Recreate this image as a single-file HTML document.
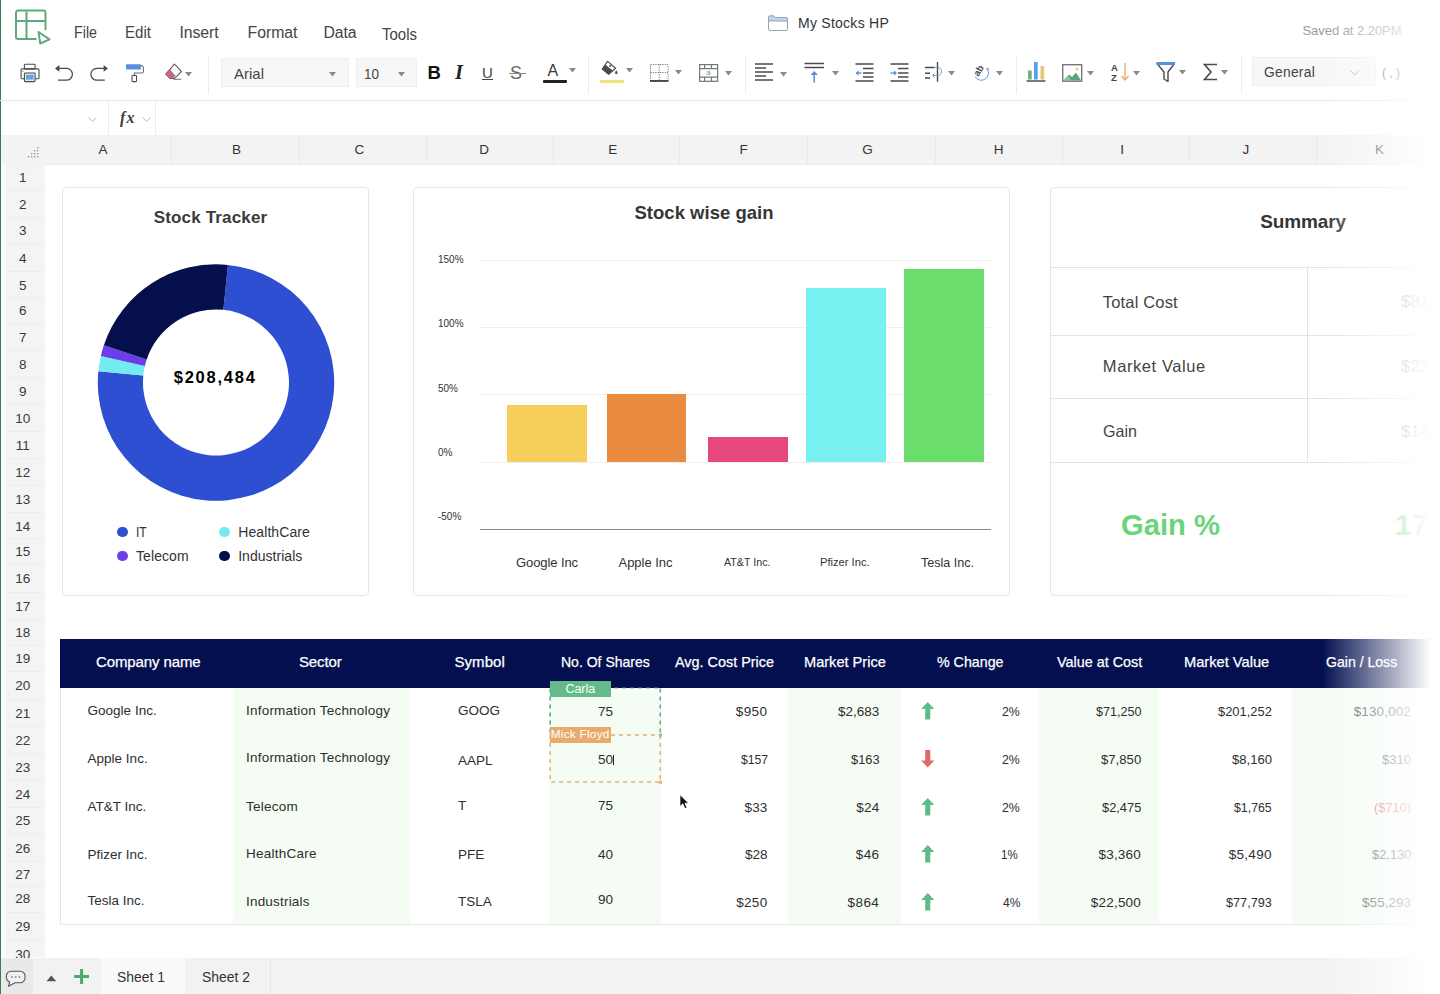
<!DOCTYPE html><html><head><meta charset="utf-8"><style>
html,body{margin:0;padding:0;}
body{width:1440px;height:994px;overflow:hidden;position:relative;background:#fff;font-family:"Liberation Sans",sans-serif;}
.t{position:absolute;white-space:nowrap;line-height:1;}
svg{overflow:visible}
</style></head><body>
<div style="position:absolute;left:0px;top:0px;width:1.2px;height:994px;background:#3f7a57;"></div>
<svg style="position:absolute;left:14px;top:9px;" width="38" height="37" viewBox="0 0 38 37"><g fill="none" stroke="#5fa97a" stroke-width="2" stroke-linejoin="round">
<path d="M22.5 30 H4 a2 2 0 0 1 -2 -2 V3.5 a2 2 0 0 1 2 -2 H29.5 a2 2 0 0 1 2 2 V21"/>
<path d="M2 12 H31.5 M12.5 2.5 V30"/>
<path d="M24.5 23 L35.5 30.3 L26.3 34.5 Z"/>
</g></svg>
<div class="t" style="left:74.00px;top:25.23px;font-size:15.8px;color:#444;transform:scaleX(0.9034);transform-origin:0 0;">File</div>
<div class="t" style="left:124.50px;top:25.23px;font-size:15.8px;color:#444;transform:scaleX(0.9550);transform-origin:0 0;">Edit</div>
<div class="t" style="left:179.50px;top:25.23px;font-size:15.8px;color:#444;letter-spacing:-0.086px;">Insert</div>
<div class="t" style="left:247.50px;top:25.23px;font-size:15.8px;color:#444;letter-spacing:-0.006px;">Format</div>
<div class="t" style="left:323.50px;top:25.23px;font-size:15.8px;color:#444;letter-spacing:-0.094px;">Data</div>
<div class="t" style="left:381.50px;top:26.93px;font-size:15.8px;color:#444;transform:scaleX(0.9489);transform-origin:0 0;">Tools</div>
<svg style="position:absolute;left:767px;top:14px;" width="22" height="17" viewBox="0 0 22 17"><path d="M1.5 3.5 a1.5 1.5 0 0 1 1.5 -1.5 H7 L8.5 3.5 H19 a1.5 1.5 0 0 1 1.5 1.5 V15 a1.5 1.5 0 0 1 -1.5 1.5 H3 a1.5 1.5 0 0 1 -1.5 -1.5 Z" fill="#fff" stroke="#9aa4b2" stroke-width="1"/>
<path d="M1.5 3.5 a1.5 1.5 0 0 1 1.5 -1.5 H7 L8.5 3.5 H19 a1.5 1.5 0 0 1 1.5 1.5 V7 H1.5 Z" fill="#bcd3f2" stroke="#9aa4b2" stroke-width="1"/></svg>
<div class="t" style="left:798.00px;top:15.85px;font-size:14px;color:#333;letter-spacing:0.258px;">My Stocks HP</div>
<div class="t" style="left:1302.50px;top:23.70px;font-size:13px;color:#9a9a9a;letter-spacing:-0.049px;">Saved at 2.20PM</div>
<svg style="position:absolute;left:20px;top:63px;" width="20" height="20" viewBox="0 0 20 20"><g fill="none" stroke="#4a4a4a" stroke-width="1.1">
<rect x="4.4" y="1.3" width="10.7" height="4.6" rx="0.8"/>
<path d="M4.2 15.8 H2.2 a1.1 1.1 0 0 1 -1.1 -1.1 V7 a1.1 1.1 0 0 1 1.1 -1.1 H17.9 a1.1 1.1 0 0 1 1.1 1.1 V14.7 a1.1 1.1 0 0 1 -1.1 1.1 H15.2"/></g>
<rect x="4.4" y="10" width="10.7" height="8.6" rx="0.8" fill="#dbe7f7" stroke="#4a4a4a" stroke-width="1.1"/>
<rect x="6" y="11.8" width="7.5" height="4.8" fill="#6c9ee0"/><circle cx="3" cy="8.2" r="0.5" fill="#4a4a4a"/></svg>
<svg style="position:absolute;left:54px;top:64px;" width="20" height="18" viewBox="0 0 20 18"><path d="M4 4.4 H12.5 a5.9 5.9 0 0 1 0 11.8 H4" fill="none" stroke="#4a4a4a" stroke-width="1.25"/><path d="M1 4.4 L5.4 1 V7.8 Z" fill="#4a4a4a"/></svg>
<svg style="position:absolute;left:89px;top:64px;" width="20" height="18" viewBox="0 0 20 18"><path d="M16 4.4 H7.8 a5.9 5.9 0 0 0 0 11.8 H15.8" fill="none" stroke="#4a4a4a" stroke-width="1.25"/><path d="M19 4.4 L14.6 1 V7.8 Z" fill="#4a4a4a"/></svg>
<svg style="position:absolute;left:125px;top:63px;" width="20" height="20" viewBox="0 0 20 20"><rect x="1" y="1.25" width="15" height="5.3" rx="0.8" fill="#5b8fdc"/>
<path d="M16 2.6 Q18.4 2.8 18.4 5 V8.6 Q18.4 10 17 10 H9.3 V12.4" fill="none" stroke="#6b6b6b" stroke-width="1.05"/>
<rect x="7" y="12.4" width="4.5" height="6.2" rx="0.8" fill="#fff" stroke="#4a4a4a" stroke-width="1.05"/></svg>
<svg style="position:absolute;left:164px;top:63px;" width="20" height="18" viewBox="0 0 20 18"><path d="M10.4 1 L17.4 8.3 L10.6 15.5 H6.4 L2.2 11.3 Z" fill="#fff" stroke="#4a4a4a" stroke-width="1.05" stroke-linejoin="round"/>
<path d="M1.6 11.3 Q1.6 10.2 2.8 9 L5.4 6.6 L11.3 12.8 L8.8 15.8 H6.8 Q6 15.8 5 14.9 Z" fill="#c46b80" stroke="#8a4a5a" stroke-width="0.5"/>
<path d="M9.6 16.3 H17.2" stroke="#777" stroke-width="1.05"/></svg>
<svg style="position:absolute;left:185.3px;top:71.7px;" width="8" height="5" viewBox="0 0 8 5"><path d="M0 0 H7 L3.5 4.5 Z" fill="#8a8a8a"/></svg>
<div style="position:absolute;left:208px;top:56px;width:1px;height:38px;background:#ececec;"></div>
<div style="position:absolute;left:221px;top:58px;width:128px;height:29px;background:#f7f7f7;border:1px solid #efefef;box-sizing:border-box;"></div>
<div class="t" style="left:234.00px;top:65.90px;font-size:15px;color:#444;letter-spacing:-0.001px;">Arial</div>
<svg style="position:absolute;left:329px;top:71.7px;" width="8" height="5" viewBox="0 0 8 5"><path d="M0 0 H7 L3.5 4.5 Z" fill="#8a8a8a"/></svg>
<div style="position:absolute;left:356px;top:58px;width:61px;height:29px;background:#f7f7f7;border:1px solid #efefef;box-sizing:border-box;"></div>
<div class="t" style="left:364.00px;top:65.90px;font-size:15px;color:#444;transform:scaleX(0.8990);transform-origin:0 0;">10</div>
<svg style="position:absolute;left:398.3px;top:71.7px;" width="8" height="5" viewBox="0 0 8 5"><path d="M0 0 H7 L3.5 4.5 Z" fill="#8a8a8a"/></svg>
<div class="t" style="left:427.50px;top:63.84px;font-size:18.5px;color:#111;font-weight:bold;">B</div>
<div class="t" style="left:455px;top:61.5px;font-size:20.5px;color:#222;font-family:'Liberation Serif',serif;font-style:italic;font-weight:bold;">I</div>
<div class="t" style="left:482.00px;top:65.30px;font-size:15px;color:#444;">U</div>
<div style="position:absolute;left:482px;top:79.2px;width:11px;height:1.3px;background:#444;"></div>
<div class="t" style="left:510.00px;top:64.26px;font-size:18px;color:#666;">S</div>
<div style="position:absolute;left:509px;top:72.5px;width:17px;height:1.2px;background:#888;"></div>
<div class="t" style="left:547.50px;top:62.96px;font-size:16px;color:#3a3a3a;">A</div>
<div style="position:absolute;left:542.5px;top:79.5px;width:24px;height:3px;background:#222;border-radius:1px;"></div>
<svg style="position:absolute;left:569px;top:68.1px;" width="8" height="5" viewBox="0 0 8 5"><path d="M0 0 H7 L3.5 4.5 Z" fill="#8a8a8a"/></svg>
<div style="position:absolute;left:588px;top:56px;width:1px;height:38px;background:#ececec;"></div>
<svg style="position:absolute;left:600px;top:60px;" width="20" height="16" viewBox="0 0 20 16"><path d="M7.6 1.4 L15.6 8.3 L8.6 14.4 L2.2 9 Z" fill="#fff" stroke="#4a4a4a" stroke-width="1.15" stroke-linejoin="round"/>
<path d="M5.2 4.6 L12.9 10.8 L8.6 14.4 L2.2 9 Z" fill="#4a4a4a"/><circle cx="10.2" cy="5.9" r="1" fill="#4a4a4a"/>
<path d="M16.3 10.3 q1.2 1.7 1.2 2.6 a1.2 1.2 0 0 1 -2.4 0 q0 -0.9 1.2 -2.6z" fill="#4a4a4a"/></svg>
<div style="position:absolute;left:599.7px;top:79.9px;width:23.9px;height:2.8px;background:#efe47c;"></div>
<svg style="position:absolute;left:625.7px;top:68.1px;" width="8" height="5" viewBox="0 0 8 5"><path d="M0 0 H7 L3.5 4.5 Z" fill="#8a8a8a"/></svg>
<svg style="position:absolute;left:650px;top:64px;" width="19" height="18" viewBox="0 0 19 18"><g fill="none" stroke="#777" stroke-width="1" stroke-dasharray="1.2 1.2">
<rect x="0.5" y="0.5" width="17.5" height="16"/><path d="M9.2 0.5 V16.5 M0.5 8.5 H18"/></g><path d="M0 17 H18.5" stroke="#222" stroke-width="1.5"/></svg>
<svg style="position:absolute;left:675px;top:70px;" width="8" height="5" viewBox="0 0 8 5"><path d="M0 0 H7 L3.5 4.5 Z" fill="#8a8a8a"/></svg>
<svg style="position:absolute;left:699px;top:64px;" width="19" height="18" viewBox="0 0 19 18"><g fill="none" stroke="#777" stroke-width="1.2">
<rect x="0.6" y="0.6" width="18" height="16.7"/><path d="M0.6 4.7 H18.6 M0.6 13.1 H18.6 M5.6 0.6 V4.7 M12.5 0.6 V4.7 M5.6 13.1 V17.3 M12.5 13.1 V17.3"/></g>
<text x="9.6" y="11.2" font-size="8" fill="#4caf7a" text-anchor="middle" font-family="Liberation Sans">a</text></svg>
<svg style="position:absolute;left:724.5px;top:70.5px;" width="8" height="5" viewBox="0 0 8 5"><path d="M0 0 H7 L3.5 4.5 Z" fill="#8a8a8a"/></svg>
<div style="position:absolute;left:744.5px;top:56px;width:1px;height:38px;background:#ececec;"></div>
<svg style="position:absolute;left:755px;top:63px;" width="19" height="19" viewBox="0 0 19 19"><g stroke="#4a4a4a" stroke-width="1.5"><path d="M0 1 H18 M0 5 H11 M0 9 H18 M0 13 H11 M0 17 H18"/></g></svg>
<svg style="position:absolute;left:780px;top:72.3px;" width="8" height="5" viewBox="0 0 8 5"><path d="M0 0 H7 L3.5 4.5 Z" fill="#8a8a8a"/></svg>
<svg style="position:absolute;left:804px;top:62px;" width="21" height="21" viewBox="0 0 21 21"><g stroke="#4a4a4a" stroke-width="1.5"><path d="M0.5 1.5 H20 M0.5 5.5 H20"/></g><path d="M10.2 20.5 V12" stroke="#5b8fdc" stroke-width="1.6"/><path d="M6.5 13 L10.2 9 L14 13 Z" fill="#5b8fdc"/></svg>
<svg style="position:absolute;left:831.6px;top:70.8px;" width="8" height="5" viewBox="0 0 8 5"><path d="M0 0 H7 L3.5 4.5 Z" fill="#8a8a8a"/></svg>
<svg style="position:absolute;left:855px;top:63px;" width="19" height="19" viewBox="0 0 19 19"><g stroke="#4a4a4a" stroke-width="1.5"><path d="M0.5 1 H18.5 M8 5.5 H18.5 M8 10 H18.5 M8 14 H18.5 M0.5 18 H18.5"/></g><path d="M6.5 10 H1.5" stroke="#5b8fdc" stroke-width="1.4"/><path d="M0.5 10 L3.5 7.5 V12.5 Z" fill="#5b8fdc"/></svg>
<svg style="position:absolute;left:890px;top:63px;" width="19" height="19" viewBox="0 0 19 19"><g stroke="#4a4a4a" stroke-width="1.5"><path d="M0.5 1 H18.5 M8 5.5 H18.5 M8 10 H18.5 M8 14 H18.5 M0.5 18 H18.5"/></g><path d="M0.5 10 H5" stroke="#5b8fdc" stroke-width="1.4"/><path d="M7 10 L4 7.5 V12.5 Z" fill="#5b8fdc"/></svg>
<svg style="position:absolute;left:924px;top:61px;" width="22" height="23" viewBox="0 0 22 23"><g stroke="#4a4a4a" stroke-width="1.5"><path d="M1 6.4 H10.7 M1 12.3 H6 M1 17.1 H6"/></g><path d="M13.5 1 V20.75" stroke="#4a4a4a" stroke-width="1.4"/>
<path d="M10.7 6.4 H13.5 A4 4 0 0 1 13.5 14.5 H8.6" fill="none" stroke="#7aa0d8" stroke-width="1"/><path d="M10.6 12.5 L8.4 14.5 L10.6 16.5" fill="none" stroke="#7aa0d8" stroke-width="1"/></svg>
<svg style="position:absolute;left:948px;top:70.8px;" width="8" height="5" viewBox="0 0 8 5"><path d="M0 0 H7 L3.5 4.5 Z" fill="#8a8a8a"/></svg>
<svg style="position:absolute;left:970px;top:62px;" width="22" height="20" viewBox="0 0 22 20"><text x="8.3" y="12" font-size="9.5" font-weight="bold" fill="#4a4a4a" font-family="Liberation Sans" text-anchor="middle" transform="rotate(-60 8.3 8.5)">ab</text>
<path d="M5 14.6 A6.8 6.8 0 0 0 17.6 7.5" fill="none" stroke="#6c9ee0" stroke-width="1"/><path d="M15.8 7.4 L17.9 5.8 L18.7 8.6" fill="none" stroke="#6c9ee0" stroke-width="1"/></svg>
<svg style="position:absolute;left:996px;top:70.8px;" width="8" height="5" viewBox="0 0 8 5"><path d="M0 0 H7 L3.5 4.5 Z" fill="#8a8a8a"/></svg>
<div style="position:absolute;left:1015.5px;top:56px;width:1px;height:38px;background:#ececec;"></div>
<svg style="position:absolute;left:1026px;top:61px;" width="21" height="22" viewBox="0 0 21 22"><rect x="2" y="9.5" width="3.7" height="9" fill="#6fb07a"/><rect x="8" y="1" width="3.7" height="17.5" fill="#5b9ee6"/><rect x="14.5" y="5" width="3.7" height="13.5" fill="#e8c57a"/><path d="M0.5 20 H19.5" stroke="#333" stroke-width="1.3"/></svg>
<svg style="position:absolute;left:1062px;top:64px;" width="21" height="19" viewBox="0 0 21 19"><rect x="0.7" y="0.7" width="19" height="16.5" fill="#fff" stroke="#777" stroke-width="1.4"/><path d="M1.5 16.5 L7 10.5 L10 13 L14 8.5 L19 16.5 Z" fill="#5aa57a"/><path d="M1.5 16.5 L6 11.5 L9 16.5 Z" fill="#8cc69c"/><circle cx="15" cy="5" r="1.5" fill="#e8d45a"/></svg>
<svg style="position:absolute;left:1087px;top:71px;" width="8" height="5" viewBox="0 0 8 5"><path d="M0 0 H7 L3.5 4.5 Z" fill="#8a8a8a"/></svg>
<div class="t" style="left:1111.00px;top:62.96px;font-size:9.5px;color:#444;font-weight:bold;">A</div>
<div class="t" style="left:1111.00px;top:72.96px;font-size:9.5px;color:#444;font-weight:bold;">Z</div>
<svg style="position:absolute;left:1120px;top:62px;" width="10" height="20" viewBox="0 0 10 20"><path d="M5 1 V18 M1.5 14 L5 18 L8.5 14" fill="none" stroke="#e8a86a" stroke-width="1.3"/></svg>
<svg style="position:absolute;left:1132.5px;top:71px;" width="8" height="5" viewBox="0 0 8 5"><path d="M0 0 H7 L3.5 4.5 Z" fill="#8a8a8a"/></svg>
<svg style="position:absolute;left:1156px;top:62px;" width="20" height="21" viewBox="0 0 20 21"><path d="M1 1.5 H18.5 L12 10 V19.5 L8 17 V10 Z" fill="none" stroke="#4a4a4a" stroke-width="1.4" stroke-linejoin="round"/><path d="M0.5 0 H19 V3 H0.5 Z" fill="#5b8fdc"/></svg>
<svg style="position:absolute;left:1178.7px;top:69.8px;" width="8" height="5" viewBox="0 0 8 5"><path d="M0 0 H7 L3.5 4.5 Z" fill="#8a8a8a"/></svg>
<svg style="position:absolute;left:1203px;top:63px;" width="15" height="18" viewBox="0 0 15 18"><path d="M14 1.5 H1.5 L8 9 L1.5 16.5 H14" fill="none" stroke="#4a4a4a" stroke-width="1.6"/></svg>
<svg style="position:absolute;left:1220.8px;top:69.8px;" width="8" height="5" viewBox="0 0 8 5"><path d="M0 0 H7 L3.5 4.5 Z" fill="#8a8a8a"/></svg>
<div style="position:absolute;left:1240.5px;top:56px;width:1px;height:38px;background:#ececec;"></div>
<div style="position:absolute;left:1252px;top:57px;width:124px;height:29px;background:#f7f7f7;border:1px solid #efefef;box-sizing:border-box;"></div>
<div class="t" style="left:1264.00px;top:66.12px;font-size:13.8px;color:#444;letter-spacing:0.272px;">General</div>
<svg style="position:absolute;left:1350px;top:70px;" width="10" height="6" viewBox="0 0 10 6"><path d="M0.5 0.5 L4.7 5 L9 0.5" fill="none" stroke="#aaa" stroke-width="1"/></svg>
<div class="t" style="left:1381.50px;top:66.00px;font-size:13px;color:#555;transform:scaleX(0.9234);transform-origin:0 0;">( , )</div>
<div style="position:absolute;left:0px;top:100px;width:1440px;height:1px;background:#e6e6e6;"></div>
<div style="position:absolute;left:108px;top:101px;width:1px;height:34px;background:#ececec;"></div>
<div style="position:absolute;left:155px;top:101px;width:1px;height:34px;background:#ececec;"></div>
<svg style="position:absolute;left:88px;top:117px;" width="9" height="6" viewBox="0 0 9 6"><path d="M0.5 0.5 L4.5 4.5 L8.5 0.5" fill="none" stroke="#bbb" stroke-width="1"/></svg>
<div class="t" style="left:120px;top:110px;font-size:16px;letter-spacing:1.2px;color:#404040;font-family:'Liberation Serif',serif;font-style:italic;font-weight:bold;">fx</div>
<svg style="position:absolute;left:142px;top:117px;" width="9" height="6" viewBox="0 0 9 6"><path d="M0.5 0.5 L4.5 4.5 L8.5 0.5" fill="none" stroke="#bbb" stroke-width="1"/></svg>
<div style="position:absolute;left:1.3px;top:135px;width:1440px;height:29px;background:#f3f3f3;"></div>
<div style="position:absolute;left:45px;top:163.5px;width:1395px;height:0.8px;background:#ececec;"></div>
<div style="position:absolute;left:171.2px;top:135px;width:1px;height:29px;background:#e8e8e8;"></div>
<div style="position:absolute;left:299px;top:135px;width:1px;height:29px;background:#e8e8e8;"></div>
<div style="position:absolute;left:426px;top:135px;width:1px;height:29px;background:#e8e8e8;"></div>
<div style="position:absolute;left:553px;top:135px;width:1px;height:29px;background:#e8e8e8;"></div>
<div style="position:absolute;left:679px;top:135px;width:1px;height:29px;background:#e8e8e8;"></div>
<div style="position:absolute;left:807px;top:135px;width:1px;height:29px;background:#e8e8e8;"></div>
<div style="position:absolute;left:935px;top:135px;width:1px;height:29px;background:#e8e8e8;"></div>
<div style="position:absolute;left:1061.5px;top:135px;width:1px;height:29px;background:#e8e8e8;"></div>
<div style="position:absolute;left:1189.3px;top:135px;width:1px;height:29px;background:#e8e8e8;"></div>
<div style="position:absolute;left:1315.5px;top:135px;width:1px;height:29px;background:#e8e8e8;"></div>
<div class="t" style="left:98.60px;top:143.17px;font-size:13.5px;color:#333;">A</div>
<div class="t" style="left:231.90px;top:143.17px;font-size:13.5px;color:#333;">B</div>
<div class="t" style="left:354.53px;top:143.17px;font-size:13.5px;color:#333;">C</div>
<div class="t" style="left:479.13px;top:143.17px;font-size:13.5px;color:#333;">D</div>
<div class="t" style="left:608.20px;top:143.17px;font-size:13.5px;color:#333;">E</div>
<div class="t" style="left:739.48px;top:143.17px;font-size:13.5px;color:#333;">F</div>
<div class="t" style="left:862.35px;top:143.17px;font-size:13.5px;color:#333;">G</div>
<div class="t" style="left:993.63px;top:143.17px;font-size:13.5px;color:#333;">H</div>
<div class="t" style="left:1120.32px;top:143.17px;font-size:13.5px;color:#333;">I</div>
<div class="t" style="left:1242.42px;top:143.17px;font-size:13.5px;color:#333;">J</div>
<div class="t" style="left:1374.90px;top:143.17px;font-size:13.5px;color:#333;">K</div>
<svg style="position:absolute;left:27px;top:144.5px;" width="14" height="14" viewBox="0 0 14 14"><rect x="10" y="2" width="1.4" height="1.4" fill="#999"/><rect x="10" y="5" width="1.4" height="1.4" fill="#999"/><rect x="10" y="8" width="1.4" height="1.4" fill="#999"/><rect x="10" y="11" width="1.4" height="1.4" fill="#999"/><rect x="7" y="5" width="1.4" height="1.4" fill="#999"/><rect x="7" y="8" width="1.4" height="1.4" fill="#999"/><rect x="7" y="11" width="1.4" height="1.4" fill="#999"/><rect x="4" y="8" width="1.4" height="1.4" fill="#999"/><rect x="4" y="11" width="1.4" height="1.4" fill="#999"/><rect x="1" y="11" width="1.4" height="1.4" fill="#999"/></svg>
<div style="position:absolute;left:6px;top:164px;width:38.7px;height:793px;background:#f4f4f4;"></div>
<div style="position:absolute;left:1.2px;top:164px;width:4.8px;height:793px;background:#f9faf9;"></div>
<div style="position:absolute;left:6px;top:190.2px;width:38px;height:1px;background:#ececec;"></div>
<div class="t" style="left:19.05px;top:170.97px;font-size:13.5px;color:#3a3a3a;">1</div>
<div style="position:absolute;left:6px;top:216.65px;width:38px;height:1px;background:#ececec;"></div>
<div class="t" style="left:19.05px;top:198.17px;font-size:13.5px;color:#3a3a3a;">2</div>
<div style="position:absolute;left:6px;top:243.8px;width:38px;height:1px;background:#ececec;"></div>
<div class="t" style="left:19.05px;top:223.87px;font-size:13.5px;color:#3a3a3a;">3</div>
<div style="position:absolute;left:6px;top:271.20000000000005px;width:38px;height:1px;background:#ececec;"></div>
<div class="t" style="left:19.05px;top:252.47px;font-size:13.5px;color:#3a3a3a;">4</div>
<div style="position:absolute;left:6px;top:297.05px;width:38px;height:1px;background:#ececec;"></div>
<div class="t" style="left:19.05px;top:278.67px;font-size:13.5px;color:#3a3a3a;">5</div>
<div style="position:absolute;left:6px;top:323.20000000000005px;width:38px;height:1px;background:#ececec;"></div>
<div class="t" style="left:19.05px;top:304.17px;font-size:13.5px;color:#3a3a3a;">6</div>
<div style="position:absolute;left:6px;top:350.1px;width:38px;height:1px;background:#ececec;"></div>
<div class="t" style="left:19.05px;top:330.97px;font-size:13.5px;color:#3a3a3a;">7</div>
<div style="position:absolute;left:6px;top:377.20000000000005px;width:38px;height:1px;background:#ececec;"></div>
<div class="t" style="left:19.05px;top:357.97px;font-size:13.5px;color:#3a3a3a;">8</div>
<div style="position:absolute;left:6px;top:404.35px;width:38px;height:1px;background:#ececec;"></div>
<div class="t" style="left:19.05px;top:385.17px;font-size:13.5px;color:#3a3a3a;">9</div>
<div style="position:absolute;left:6px;top:431.2px;width:38px;height:1px;background:#ececec;"></div>
<div class="t" style="left:15.29px;top:412.27px;font-size:13.5px;color:#3a3a3a;">10</div>
<div style="position:absolute;left:6px;top:458.1px;width:38px;height:1px;background:#ececec;"></div>
<div class="t" style="left:15.79px;top:438.87px;font-size:13.5px;color:#3a3a3a;">11</div>
<div style="position:absolute;left:6px;top:485.04999999999995px;width:38px;height:1px;background:#ececec;"></div>
<div class="t" style="left:15.29px;top:466.07px;font-size:13.5px;color:#3a3a3a;">12</div>
<div style="position:absolute;left:6px;top:511.79999999999995px;width:38px;height:1px;background:#ececec;"></div>
<div class="t" style="left:15.29px;top:492.77px;font-size:13.5px;color:#3a3a3a;">13</div>
<div style="position:absolute;left:6px;top:537.9000000000001px;width:38px;height:1px;background:#ececec;"></div>
<div class="t" style="left:15.29px;top:519.57px;font-size:13.5px;color:#3a3a3a;">14</div>
<div style="position:absolute;left:6px;top:564.2px;width:38px;height:1px;background:#ececec;"></div>
<div class="t" style="left:15.29px;top:544.97px;font-size:13.5px;color:#3a3a3a;">15</div>
<div style="position:absolute;left:6px;top:591.55px;width:38px;height:1px;background:#ececec;"></div>
<div class="t" style="left:15.29px;top:572.17px;font-size:13.5px;color:#3a3a3a;">16</div>
<div style="position:absolute;left:6px;top:618.7px;width:38px;height:1px;background:#ececec;"></div>
<div class="t" style="left:15.29px;top:599.67px;font-size:13.5px;color:#3a3a3a;">17</div>
<div style="position:absolute;left:6px;top:644.6500000000001px;width:38px;height:1px;background:#ececec;"></div>
<div class="t" style="left:15.29px;top:626.47px;font-size:13.5px;color:#3a3a3a;">18</div>
<div style="position:absolute;left:6px;top:670.8px;width:38px;height:1px;background:#ececec;"></div>
<div class="t" style="left:15.29px;top:651.57px;font-size:13.5px;color:#3a3a3a;">19</div>
<div style="position:absolute;left:6px;top:698.5px;width:38px;height:1px;background:#ececec;"></div>
<div class="t" style="left:15.29px;top:678.77px;font-size:13.5px;color:#3a3a3a;">20</div>
<div style="position:absolute;left:6px;top:726.05px;width:38px;height:1px;background:#ececec;"></div>
<div class="t" style="left:15.29px;top:706.97px;font-size:13.5px;color:#3a3a3a;">21</div>
<div style="position:absolute;left:6px;top:752.85px;width:38px;height:1px;background:#ececec;"></div>
<div class="t" style="left:15.29px;top:733.87px;font-size:13.5px;color:#3a3a3a;">22</div>
<div style="position:absolute;left:6px;top:780.05px;width:38px;height:1px;background:#ececec;"></div>
<div class="t" style="left:15.29px;top:760.57px;font-size:13.5px;color:#3a3a3a;">23</div>
<div style="position:absolute;left:6px;top:806.65px;width:38px;height:1px;background:#ececec;"></div>
<div class="t" style="left:15.29px;top:788.27px;font-size:13.5px;color:#3a3a3a;">24</div>
<div style="position:absolute;left:6px;top:833.3px;width:38px;height:1px;background:#ececec;"></div>
<div class="t" style="left:15.29px;top:813.77px;font-size:13.5px;color:#3a3a3a;">25</div>
<div style="position:absolute;left:6px;top:860.5px;width:38px;height:1px;background:#ececec;"></div>
<div class="t" style="left:15.29px;top:841.57px;font-size:13.5px;color:#3a3a3a;">26</div>
<div style="position:absolute;left:6px;top:885.95px;width:38px;height:1px;background:#ececec;"></div>
<div class="t" style="left:15.29px;top:868.17px;font-size:13.5px;color:#3a3a3a;">27</div>
<div style="position:absolute;left:6px;top:912.0px;width:38px;height:1px;background:#ececec;"></div>
<div class="t" style="left:15.29px;top:892.47px;font-size:13.5px;color:#3a3a3a;">28</div>
<div style="position:absolute;left:6px;top:939.7px;width:38px;height:1px;background:#ececec;"></div>
<div class="t" style="left:15.29px;top:920.27px;font-size:13.5px;color:#3a3a3a;">29</div>
<div class="t" style="left:15.29px;top:947.87px;font-size:13.5px;color:#3a3a3a;">30</div>
<div id="sheet"></div>
<div style="position:absolute;left:62px;top:187px;width:307px;height:409px;border:1px solid #e6e6e6;border-radius:4px;box-sizing:border-box;background:#fff;"></div>
<div class="t" style="left:153.75px;top:209.41px;font-size:17px;color:#3a3a3a;font-weight:bold;letter-spacing:0.153px;">Stock Tracker</div>
<svg style="position:absolute;left:0;top:0" width="1440" height="994"><path d="M227.94 264.91 A118.2 118.2 0 1 1 98.34 371.17 L143.34 375.50 A73 73 0 1 0 223.38 309.87 Z" fill="#2e4fd1"/><path d="M98.34 371.17 A118.2 118.2 0 0 1 100.83 355.91 L144.87 366.08 A73 73 0 0 0 143.34 375.50 Z" fill="#72ecf0"/><path d="M100.83 355.91 A118.2 118.2 0 0 1 103.84 345.19 L146.73 359.46 A73 73 0 0 0 144.87 366.08 Z" fill="#6b3ee9"/><path d="M103.84 345.19 A118.2 118.2 0 0 1 227.94 264.91 L223.38 309.87 A73 73 0 0 0 146.73 359.46 Z" fill="#040f4c"/></svg>
<div class="t" style="left:173.70px;top:369.03px;font-size:16.5px;color:#000;font-weight:bold;letter-spacing:1.773px;">$208,484</div>
<div style="position:absolute;left:117.2px;top:526.7px;width:10.6px;height:10.6px;border-radius:50%;background:#2e4fd1"></div>
<div class="t" style="left:136.00px;top:525.35px;font-size:14px;color:#333;transform:scaleX(0.8600);transform-origin:0 0;">IT</div>
<div style="position:absolute;left:219.39999999999998px;top:526.7px;width:10.6px;height:10.6px;border-radius:50%;background:#72ecf0"></div>
<div class="t" style="left:238.20px;top:525.35px;font-size:14px;color:#333;letter-spacing:0.099px;">HealthCare</div>
<div style="position:absolute;left:117.2px;top:550.7px;width:10.6px;height:10.6px;border-radius:50%;background:#6b3ee9"></div>
<div class="t" style="left:136.00px;top:549.35px;font-size:14px;color:#333;letter-spacing:0.081px;">Telecom</div>
<div style="position:absolute;left:219.39999999999998px;top:550.7px;width:10.6px;height:10.6px;border-radius:50%;background:#040f4c"></div>
<div class="t" style="left:238.20px;top:549.35px;font-size:14px;color:#333;letter-spacing:0.027px;">Industrials</div>
<div style="position:absolute;left:413px;top:187px;width:597px;height:409px;border:1px solid #e6e6e6;border-radius:4px;box-sizing:border-box;background:#fff;"></div>
<div class="t" style="left:634.50px;top:203.94px;font-size:18.5px;color:#353535;font-weight:bold;letter-spacing:0.014px;">Stock wise gain</div>
<div style="position:absolute;left:480px;top:260px;width:511px;height:1px;background:#efefef;"></div>
<div class="t" style="left:438.00px;top:253.71px;font-size:10.5px;color:#333;transform:scaleX(0.9500);transform-origin:0 0;">150%</div>
<div style="position:absolute;left:480px;top:327px;width:511px;height:1px;background:#efefef;"></div>
<div class="t" style="left:438.00px;top:317.91px;font-size:10.5px;color:#333;transform:scaleX(0.9500);transform-origin:0 0;">100%</div>
<div style="position:absolute;left:480px;top:394px;width:511px;height:1px;background:#efefef;"></div>
<div class="t" style="left:438.00px;top:382.71px;font-size:10.5px;color:#333;transform:scaleX(0.9500);transform-origin:0 0;">50%</div>
<div style="position:absolute;left:480px;top:462px;width:511px;height:1px;background:#efefef;"></div>
<div class="t" style="left:438.00px;top:446.91px;font-size:10.5px;color:#333;transform:scaleX(0.9500);transform-origin:0 0;">0%</div>
<div class="t" style="left:438.00px;top:511.31px;font-size:10.5px;color:#333;transform:scaleX(0.9500);transform-origin:0 0;">-50%</div>
<div style="position:absolute;left:480px;top:529px;width:511px;height:1.3px;background:#888;"></div>
<div style="position:absolute;left:507.2px;top:405px;width:79.40000000000003px;height:56.69999999999999px;background:#f5cf5a;"></div>
<div style="position:absolute;left:606.5px;top:394.3px;width:79.5px;height:67.39999999999998px;background:#e98b3f;"></div>
<div style="position:absolute;left:708.4px;top:436.8px;width:79.60000000000002px;height:24.899999999999977px;background:#e6477c;"></div>
<div style="position:absolute;left:806px;top:287.7px;width:80.29999999999995px;height:174.0px;background:#78f0f0;"></div>
<div style="position:absolute;left:904.4px;top:269px;width:79.60000000000002px;height:192.7px;background:#6add6a;"></div>
<div class="t" style="left:516.00px;top:555.70px;font-size:13px;color:#333;letter-spacing:-0.087px;">Google Inc</div>
<div class="t" style="left:618.50px;top:555.70px;font-size:13px;color:#333;letter-spacing:-0.023px;">Apple Inc</div>
<div class="t" style="left:723.75px;top:556.97px;font-size:11.5px;color:#333;transform:scaleX(0.9289);transform-origin:0 0;">AT&T Inc.</div>
<div class="t" style="left:820.20px;top:556.97px;font-size:11.5px;color:#333;transform:scaleX(0.9701);transform-origin:0 0;">Pfizer Inc.</div>
<div class="t" style="left:920.50px;top:555.70px;font-size:13px;color:#333;transform:scaleX(0.9652);transform-origin:0 0;">Tesla Inc.</div>
<div style="position:absolute;left:1050px;top:187px;width:420px;height:409px;border:1px solid #e6e6e6;border-radius:4px;box-sizing:border-box;background:#fff;"></div>
<div class="t" style="left:1260.30px;top:211.82px;font-size:19px;color:#353535;font-weight:bold;letter-spacing:-0.128px;">Summary</div>
<div style="position:absolute;left:1050px;top:267px;width:400px;height:1px;background:#e3e3e3;"></div>
<div style="position:absolute;left:1050px;top:335px;width:400px;height:1px;background:#e3e3e3;"></div>
<div style="position:absolute;left:1050px;top:398px;width:400px;height:1px;background:#e3e3e3;"></div>
<div style="position:absolute;left:1050px;top:462px;width:400px;height:1px;background:#e3e3e3;"></div>
<div style="position:absolute;left:1307px;top:267px;width:1px;height:195px;background:#e3e3e3;"></div>
<div class="t" style="left:1102.80px;top:293.53px;font-size:16.5px;color:#444;letter-spacing:0.164px;">Total Cost</div>
<div class="t" style="left:1401.00px;top:293.11px;font-size:17px;color:#999;">$81</div>
<div class="t" style="left:1102.80px;top:358.23px;font-size:16.5px;color:#444;letter-spacing:0.584px;">Market Value</div>
<div class="t" style="left:1401.00px;top:357.81px;font-size:17px;color:#999;">$22</div>
<div class="t" style="left:1102.80px;top:423.23px;font-size:16.5px;color:#444;transform:scaleX(0.9755);transform-origin:0 0;">Gain</div>
<div class="t" style="left:1401.00px;top:422.81px;font-size:17px;color:#999;">$14</div>
<div class="t" style="left:1121.00px;top:509.61px;font-size:30px;color:#6ad47a;font-weight:bold;transform:scaleX(0.9736);transform-origin:0 0;">Gain %</div>
<div class="t" style="left:1395.00px;top:509.61px;font-size:30px;color:#6ad47a;font-weight:bold;">17</div>
<div style="position:absolute;left:60px;top:639px;width:1380px;height:48.5px;background:#030f4e;"></div>
<div style="position:absolute;left:60px;top:687.5px;width:1380px;height:237.5px;border:1px solid #e6e6e6;border-top:none;box-sizing:border-box;"></div>
<div style="position:absolute;left:233px;top:687.5px;width:177px;height:236.5px;background:#f4fcf4;"></div>
<div style="position:absolute;left:549px;top:687.5px;width:112px;height:236.5px;background:#f4fcf4;"></div>
<div style="position:absolute;left:788px;top:687.5px;width:113px;height:236.5px;background:#f4fcf4;"></div>
<div style="position:absolute;left:1039px;top:687.5px;width:120px;height:236.5px;background:#f4fcf4;"></div>
<div style="position:absolute;left:1292px;top:687.5px;width:148px;height:236.5px;background:#f4fcf4;"></div>
<div class="t" style="left:96.00px;top:654.40px;font-size:15px;color:#fff;letter-spacing:-0.107px;-webkit-text-stroke:0.25px #fff;">Company name</div>
<div class="t" style="left:298.90px;top:654.40px;font-size:15px;color:#fff;letter-spacing:-0.092px;-webkit-text-stroke:0.25px #fff;">Sector</div>
<div class="t" style="left:454.40px;top:654.40px;font-size:15px;color:#fff;letter-spacing:0.097px;-webkit-text-stroke:0.25px #fff;">Symbol</div>
<div class="t" style="left:560.60px;top:654.40px;font-size:15px;color:#fff;transform:scaleX(0.9344);transform-origin:0 0;-webkit-text-stroke:0.25px #fff;">No. Of Shares</div>
<div class="t" style="left:675.00px;top:654.40px;font-size:15px;color:#fff;transform:scaleX(0.9603);transform-origin:0 0;-webkit-text-stroke:0.25px #fff;">Avg. Cost Price</div>
<div class="t" style="left:803.80px;top:654.40px;font-size:15px;color:#fff;transform:scaleX(0.9717);transform-origin:0 0;-webkit-text-stroke:0.25px #fff;">Market Price</div>
<div class="t" style="left:936.95px;top:654.40px;font-size:15px;color:#fff;transform:scaleX(0.9493);transform-origin:0 0;-webkit-text-stroke:0.25px #fff;">% Change</div>
<div class="t" style="left:1057.20px;top:654.40px;font-size:15px;color:#fff;transform:scaleX(0.9580);transform-origin:0 0;-webkit-text-stroke:0.25px #fff;">Value at Cost</div>
<div class="t" style="left:1183.80px;top:654.40px;font-size:15px;color:#fff;transform:scaleX(0.9764);transform-origin:0 0;-webkit-text-stroke:0.25px #fff;">Market Value</div>
<div class="t" style="left:1326.30px;top:654.40px;font-size:15px;color:#fff;transform:scaleX(0.9384);transform-origin:0 0;-webkit-text-stroke:0.25px #fff;">Gain / Loss</div>
<div class="t" style="left:87.60px;top:704.37px;font-size:13.5px;color:#2e2e2e;">Google Inc.</div>
<div class="t" style="left:246.00px;top:703.97px;font-size:13.5px;color:#2e2e2e;letter-spacing:0.222px;">Information Technology</div>
<div class="t" style="left:458.00px;top:704.37px;font-size:13.5px;color:#2e2e2e;">GOOG</div>
<div class="t" style="left:598.09px;top:704.67px;font-size:13.5px;color:#2e2e2e;">75</div>
<div class="t" style="left:735.70px;top:705.27px;font-size:13.5px;color:#2e2e2e;letter-spacing:0.442px;">$950</div>
<div class="t" style="left:838.00px;top:705.27px;font-size:13.5px;color:#2e2e2e;letter-spacing:0.001px;">$2,683</div>
<svg style="position:absolute;left:921.3px;top:702.2px;" width="13.5" height="17.5" viewBox="0 0 13.5 17.5"><path d="M6.75 0 L13.3 7 H9.3 V17.5 H4.2 V7 H0.2 Z" fill="#5dba8a"/></svg>
<div class="t" style="left:1002.20px;top:705.27px;font-size:13.5px;color:#2e2e2e;transform:scaleX(0.9123);transform-origin:0 0;">2%</div>
<div class="t" style="left:1095.60px;top:705.27px;font-size:13.5px;color:#2e2e2e;transform:scaleX(0.9324);transform-origin:0 0;">$71,250</div>
<div class="t" style="left:1217.90px;top:705.27px;font-size:13.5px;color:#2e2e2e;transform:scaleX(0.9555);transform-origin:0 0;">$201,252</div>
<div class="t" style="left:1353.70px;top:705.27px;font-size:13.5px;color:#555;letter-spacing:0.124px;">$130,002</div>
<div class="t" style="left:87.60px;top:752.32px;font-size:13.5px;color:#2e2e2e;">Apple Inc.</div>
<div class="t" style="left:246.00px;top:751.17px;font-size:13.5px;color:#2e2e2e;letter-spacing:0.222px;">Information Technology</div>
<div class="t" style="left:458.00px;top:753.67px;font-size:13.5px;color:#2e2e2e;">AAPL</div>
<div class="t" style="left:598.09px;top:752.97px;font-size:13.5px;color:#2e2e2e;">50</div>
<div class="t" style="left:740.50px;top:752.77px;font-size:13.5px;color:#2e2e2e;transform:scaleX(0.8990);transform-origin:0 0;">$157</div>
<div class="t" style="left:850.70px;top:752.77px;font-size:13.5px;color:#2e2e2e;transform:scaleX(0.9523);transform-origin:0 0;">$163</div>
<svg style="position:absolute;left:921.3px;top:749.7px;" width="13.5" height="17.5" viewBox="0 0 13.5 17.5"><path d="M6.75 17.5 L13.3 10.5 H9.3 V0 H4.2 V10.5 H0.2 Z" fill="#df6b63"/></svg>
<div class="t" style="left:1002.20px;top:752.77px;font-size:13.5px;color:#2e2e2e;transform:scaleX(0.9123);transform-origin:0 0;">2%</div>
<div class="t" style="left:1100.90px;top:752.77px;font-size:13.5px;color:#2e2e2e;transform:scaleX(0.9736);transform-origin:0 0;">$7,850</div>
<div class="t" style="left:1231.70px;top:752.77px;font-size:13.5px;color:#2e2e2e;transform:scaleX(0.9687);transform-origin:0 0;">$8,160</div>
<div class="t" style="left:1382.00px;top:752.77px;font-size:13.5px;color:#555;transform:scaleX(0.9656);transform-origin:0 0;">$310</div>
<div class="t" style="left:87.60px;top:800.47px;font-size:13.5px;color:#2e2e2e;">AT&T Inc.</div>
<div class="t" style="left:246.00px;top:800.07px;font-size:13.5px;color:#2e2e2e;letter-spacing:0.251px;">Telecom</div>
<div class="t" style="left:458.00px;top:799.17px;font-size:13.5px;color:#2e2e2e;">T</div>
<div class="t" style="left:598.09px;top:798.67px;font-size:13.5px;color:#2e2e2e;">75</div>
<div class="t" style="left:744.50px;top:800.57px;font-size:13.5px;color:#2e2e2e;letter-spacing:0.159px;">$33</div>
<div class="t" style="left:856.30px;top:800.57px;font-size:13.5px;color:#2e2e2e;letter-spacing:0.159px;">$24</div>
<svg style="position:absolute;left:921.3px;top:797.5px;" width="13.5" height="17.5" viewBox="0 0 13.5 17.5"><path d="M6.75 0 L13.3 7 H9.3 V17.5 H4.2 V7 H0.2 Z" fill="#5dba8a"/></svg>
<div class="t" style="left:1002.20px;top:800.57px;font-size:13.5px;color:#2e2e2e;transform:scaleX(0.9123);transform-origin:0 0;">2%</div>
<div class="t" style="left:1101.80px;top:800.57px;font-size:13.5px;color:#2e2e2e;transform:scaleX(0.9518);transform-origin:0 0;">$2,475</div>
<div class="t" style="left:1234.00px;top:800.57px;font-size:13.5px;color:#2e2e2e;transform:scaleX(0.9130);transform-origin:0 0;">$1,765</div>
<div class="t" style="left:1373.90px;top:800.57px;font-size:13.5px;color:#d86a6a;transform:scaleX(0.9507);transform-origin:0 0;">($710)</div>
<div class="t" style="left:87.60px;top:847.77px;font-size:13.5px;color:#2e2e2e;">Pfizer Inc.</div>
<div class="t" style="left:246.00px;top:846.57px;font-size:13.5px;color:#2e2e2e;letter-spacing:0.239px;">HealthCare</div>
<div class="t" style="left:458.00px;top:847.97px;font-size:13.5px;color:#2e2e2e;">PFE</div>
<div class="t" style="left:598.09px;top:847.97px;font-size:13.5px;color:#2e2e2e;">40</div>
<div class="t" style="left:745.00px;top:847.57px;font-size:13.5px;color:#2e2e2e;letter-spacing:-0.008px;">$28</div>
<div class="t" style="left:855.80px;top:847.57px;font-size:13.5px;color:#2e2e2e;letter-spacing:0.325px;">$46</div>
<svg style="position:absolute;left:921.3px;top:844.5px;" width="13.5" height="17.5" viewBox="0 0 13.5 17.5"><path d="M6.75 0 L13.3 7 H9.3 V17.5 H4.2 V7 H0.2 Z" fill="#5dba8a"/></svg>
<div class="t" style="left:1001.20px;top:847.57px;font-size:13.5px;color:#2e2e2e;transform:scaleX(0.8610);transform-origin:0 0;">1%</div>
<div class="t" style="left:1098.40px;top:847.57px;font-size:13.5px;color:#2e2e2e;letter-spacing:0.235px;">$3,360</div>
<div class="t" style="left:1228.80px;top:847.57px;font-size:13.5px;color:#2e2e2e;letter-spacing:0.268px;">$5,490</div>
<div class="t" style="left:1371.50px;top:847.57px;font-size:13.5px;color:#555;transform:scaleX(0.9566);transform-origin:0 0;">$2,130</div>
<div class="t" style="left:87.60px;top:894.17px;font-size:13.5px;color:#2e2e2e;">Tesla Inc.</div>
<div class="t" style="left:246.00px;top:894.57px;font-size:13.5px;color:#2e2e2e;letter-spacing:0.196px;">Industrials</div>
<div class="t" style="left:458.00px;top:895.27px;font-size:13.5px;color:#2e2e2e;">TSLA</div>
<div class="t" style="left:598.09px;top:893.17px;font-size:13.5px;color:#2e2e2e;">90</div>
<div class="t" style="left:736.25px;top:895.57px;font-size:13.5px;color:#2e2e2e;letter-spacing:0.304px;">$250</div>
<div class="t" style="left:847.55px;top:895.57px;font-size:13.5px;color:#2e2e2e;letter-spacing:0.429px;">$864</div>
<svg style="position:absolute;left:921.3px;top:892.5px;" width="13.5" height="17.5" viewBox="0 0 13.5 17.5"><path d="M6.75 0 L13.3 7 H9.3 V17.5 H4.2 V7 H0.2 Z" fill="#5dba8a"/></svg>
<div class="t" style="left:1002.50px;top:895.57px;font-size:13.5px;color:#2e2e2e;transform:scaleX(0.8969);transform-origin:0 0;">4%</div>
<div class="t" style="left:1090.70px;top:895.57px;font-size:13.5px;color:#2e2e2e;letter-spacing:0.229px;">$22,500</div>
<div class="t" style="left:1225.90px;top:895.57px;font-size:13.5px;color:#2e2e2e;transform:scaleX(0.9385);transform-origin:0 0;">$77,793</div>
<div class="t" style="left:1362.10px;top:895.57px;font-size:13.5px;color:#555;letter-spacing:0.014px;">$55,293</div>
<svg style="position:absolute;left:540px;top:680px;" width="130" height="110" viewBox="0 0 130 110"><path d="M10.2 8.4 H120.3" stroke="#b9dfcc" stroke-width="1.4" stroke-dasharray="4 4"/>
<path d="M10.2 8.4 V55 M120.3 8.4 V55.5" stroke="#5fae8c" stroke-width="1.6" stroke-dasharray="4 4"/>
<rect x="118.8" y="53.8" width="3" height="3" fill="#6fae8f"/>
<path d="M10.2 55 V102 H120.3 V55 M71 55 H120.3" fill="none" stroke="#dfb27f" stroke-width="1.6" stroke-dasharray="4 4"/>
<rect x="118.8" y="100.5" width="3.2" height="3.2" fill="#e6b47c"/></svg>
<div style="position:absolute;left:549.5px;top:680.7px;width:61.5px;height:16.1px;background:#62bb88;"></div>
<div class="t" style="left:565.45px;top:682.82px;font-size:12.5px;color:#fff;letter-spacing:-0.034px;">Carla</div>
<div style="position:absolute;left:549.7px;top:727.2px;width:61.1px;height:15.7px;background:#e8ab6c;"></div>
<div class="t" style="left:550.75px;top:728.76px;font-size:11.8px;color:#fff;letter-spacing:0.252px;">Mick Floyd</div>
<div style="position:absolute;left:613.2px;top:754.7px;width:1.1px;height:10.5px;background:#222;"></div>
<svg style="position:absolute;left:678.5px;top:794px;" width="12" height="16" viewBox="0 0 12 16"><path d="M1 0.7 V12.5 L3.8 9.8 L6 14.6 L8 13.7 L5.9 9.2 H9.6 Z" fill="#111" stroke="#fff" stroke-width="0.7"/></svg>
<div style="position:absolute;left:1.2px;top:957.5px;width:1440px;height:37px;background:#f2f2f2;"></div>
<div style="position:absolute;left:1.2px;top:957.5px;width:31.8px;height:37px;background:#e9e9e9;"></div>
<div style="position:absolute;left:101px;top:957.5px;width:84px;height:37px;background:#fafafa;"></div>
<div style="position:absolute;left:270px;top:957.5px;width:1px;height:37px;background:#e3e3e3;"></div>
<svg style="position:absolute;left:5px;top:969px;" width="22" height="20" viewBox="0 0 22 20"><path d="M6.2 2.2 H15.2 A4.8 4.8 0 0 1 20 7 V9 A4.8 4.8 0 0 1 15.2 13.8 H10 L3.6 17.3 L4.6 12.9 A4.8 4.8 0 0 1 1.4 9 V7 A4.8 4.8 0 0 1 6.2 2.2 Z" fill="#eef1f4" stroke="#555" stroke-width="1.1" stroke-linejoin="round"/><circle cx="7" cy="8" r="0.95" fill="#7c93ad"/><circle cx="10.7" cy="8" r="0.95" fill="#7c93ad"/><circle cx="14.4" cy="8" r="0.95" fill="#7c93ad"/></svg>
<svg style="position:absolute;left:45.8px;top:974.5px;" width="12" height="8" viewBox="0 0 12 8"><path d="M0.5 6.2 L5.3 0.5 L10.2 6.2 Z" fill="#555"/></svg>
<svg style="position:absolute;left:73px;top:968px;" width="17" height="17" viewBox="0 0 17 17"><path d="M8.6 1 V16 M1.2 8.5 H16" stroke="#4ea86a" stroke-width="3"/></svg>
<div class="t" style="left:117.00px;top:969.73px;font-size:14.5px;color:#333;transform:scaleX(0.9603);transform-origin:0 0;">Sheet 1</div>
<div class="t" style="left:202.00px;top:969.73px;font-size:14.5px;color:#333;transform:scaleX(0.9603);transform-origin:0 0;">Sheet 2</div>
<div style="position:absolute;left:1322px;top:0;width:118px;height:994px;background:linear-gradient(to right,rgba(255,255,255,0) 0%,rgba(255,255,255,1) 92%);"></div>
</body></html>
